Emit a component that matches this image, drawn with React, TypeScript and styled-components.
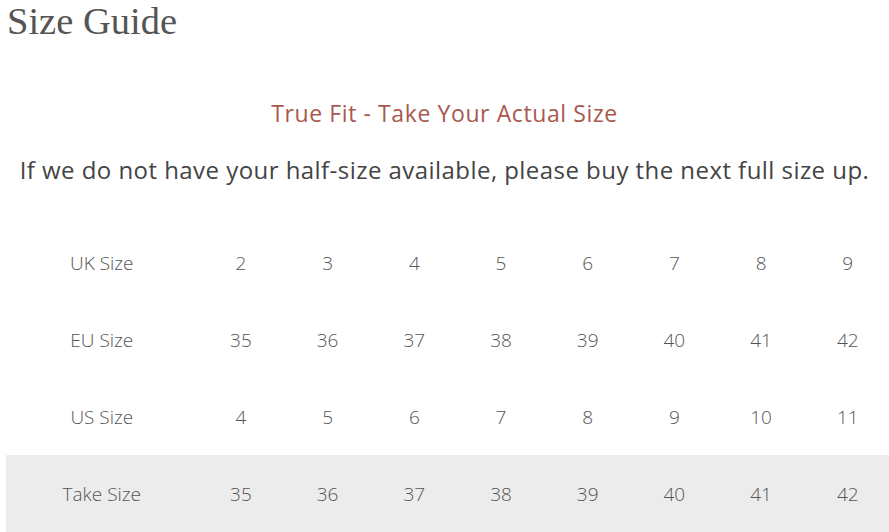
import styled, { createGlobalStyle } from 'styled-components';

const GlobalStyle = createGlobalStyle`
  html, body {
    margin: 0;
    padding: 0;
    background: #ffffff;
    overflow: hidden;
  }
`;

const Page = styled.div`
  width: 889px;
  height: 532px;
  overflow: hidden;
  font-family: "Open Sans", "DejaVu Sans", sans-serif;
  color: #555;
`;

const Title = styled.h1`
  margin: 0;
  padding: 0 0 0 7px;
  font-family: "Liberation Serif", serif;
  font-weight: 400;
  font-size: 38.5px;
  line-height: 42px;
  color: #555;
`;

const Subtitle = styled.h3`
  margin: 56px 0 0;
  text-align: center;
  font-weight: 400;
  font-size: 23px;
  letter-spacing: 0.6px;
  line-height: 30px;
  color: #a8594f;
`;

const Notice = styled.p`
  margin: 27px 0 0;
  text-align: center;
  font-weight: 500;
  font-size: 24px;
  letter-spacing: 0.45px;
  line-height: 30px;
  color: #444;
`;

const Table = styled.div`
  margin: 39px 0 0 6px;
  width: 885px;
`;

const Row = styled.div<{ $shade?: boolean }>`
  display: grid;
  grid-template-columns: 191.6px repeat(8, 86.7px);
  height: 77px;
  align-items: center;
  background: ${(p) => (p.$shade ? '#ececec' : 'transparent')};
`;

const Cell = styled.div`
  text-align: center;
  font-size: 19px;
  font-weight: 300;
  color: #555;
`;

const rows = [
  { label: 'UK Size', values: ['2', '3', '4', '5', '6', '7', '8', '9'] },
  { label: 'EU Size', values: ['35', '36', '37', '38', '39', '40', '41', '42'] },
  { label: 'US Size', values: ['4', '5', '6', '7', '8', '9', '10', '11'] },
  { label: 'Take Size', values: ['35', '36', '37', '38', '39', '40', '41', '42'], shade: true },
];

export default function App() {
  return (
    <Page>
      <GlobalStyle />
      <Title>Size Guide</Title>
      <Subtitle>True Fit - Take Your Actual Size</Subtitle>
      <Notice>If we do not have your half-size available, please buy the next full size up.</Notice>
      <Table>
        {rows.map((r) => (
          <Row key={r.label} $shade={r.shade}>
            <Cell>{r.label}</Cell>
            {r.values.map((v, i) => (
              <Cell key={i}>{v}</Cell>
            ))}
          </Row>
        ))}
      </Table>
    </Page>
  );
}
